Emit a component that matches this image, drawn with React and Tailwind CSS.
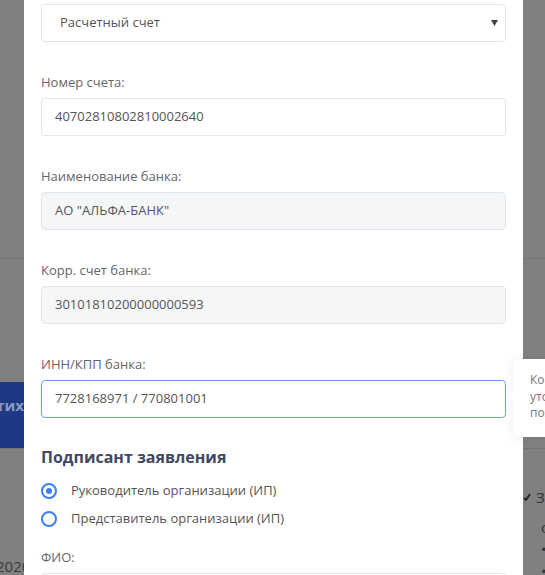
import React from 'react'

function Field({ label, value, disabled, focused }) {
  return (
    <div className="mt-[30px]">
      <div className="h-[20px] leading-[20px] text-[13px] text-[#666]">{label}</div>
      <div
        className={
          'mt-[6px] h-[38px] rounded-[4px] border px-[13px] flex items-center text-[13px] text-[#555] ' +
          (focused
            ? 'border-[#6d9df2] bg-white'
            : disabled
            ? 'border-[#e3e5ec] bg-[#f5f6f8]'
            : 'border-[#e3e5ec] bg-white')
        }
      >
        {value}
      </div>
    </div>
  )
}

function Radio({ checked, label }) {
  return (
    <div className="flex items-center h-[20px]">
      <span className="w-[16px] h-[16px] rounded-full border-2 border-[#3d7ef6] flex items-center justify-center">
        {checked && <span className="w-[6px] h-[6px] rounded-full bg-[#3d7ef6]" />}
      </span>
      <span className="ml-[14px] text-[13px] text-[#555]">{label}</span>
    </div>
  )
}

export default function App() {
  return (
    <div
      className="relative w-[545px] h-[575px] overflow-hidden bg-[#808080]"
      style={{ fontFamily: '"Open Sans", "Noto Sans", sans-serif' }}
    >
      {/* dimmed page behind the modal */}
      <div className="absolute inset-0">
        <div className="mt-[258px] h-px bg-[#747474]" />
        <div className="mt-[123px] w-[24px] h-[66px] bg-[#1d3985] flex items-center justify-end overflow-hidden">
          <span className="text-[15px] font-bold text-[#8d99bd] -mt-[20px] whitespace-nowrap">тих</span>
        </div>
        <div className="absolute left-0 right-0 top-[448px] h-px bg-[#747474]" />
        <div className="absolute left-[-4px] top-[555px] text-[15px] text-[#3a3a3a]">2020</div>
        <div className="absolute left-[523px] top-[486px] flex flex-col text-[15px] text-[#333] leading-[22px]">
          <div className="flex items-center gap-[5px]">
            <svg width="8" height="8" viewBox="0 0 8 8">
              <path d="M1 5 L3 7 L7 1" stroke="#222" strokeWidth="1.8" fill="none" />
            </svg>
            <span>З</span>
          </div>
          <div className="pl-[18px] mt-[8px]">с</div>
          <div className="pl-[18px]">•</div>
          <div className="pl-[18px]">•</div>
        </div>
      </div>

      {/* modal */}
      <div className="relative ml-[24px] w-[499px] h-full bg-white px-[17px] pt-[4px]">
        <div className="h-[38px] rounded-[4px] border border-[#e3e5ec] flex items-center justify-between pl-[18px] pr-[7px] text-[13px] text-[#555]">
          <span>Расчетный счет</span>
          <svg width="7" height="6" viewBox="0 0 7 6">
            <path d="M0 0 H7 L3.5 6 Z" fill="#444" />
          </svg>
        </div>

        <Field label="Номер счета:" value="40702810802810002640" />
        <Field label="Наименование банка:" value={'АО "АЛЬФА-БАНК"'} disabled />
        <Field label="Корр. счет банка:" value="30101810200000000593" disabled />
        <Field label="ИНН/КПП банка:" value="7728168971 / 770801001" focused />

        <div className="mt-[27px] h-[24px] leading-[24px] text-[16px] font-bold text-[#3f4863]">
          Подписант заявления
        </div>
        <div className="mt-[12px] flex flex-col gap-[8px]">
          <Radio checked label="Руководитель организации (ИП)" />
          <Radio label="Представитель организации (ИП)" />
        </div>
        <div className="mt-[18px] h-[20px] leading-[20px] text-[13px] text-[#666]">ФИО:</div>
        <div className="mt-[6px] h-[38px] rounded-[4px] border border-[#e3e5ec]" />
      </div>

      {/* tooltip */}
      <div className="absolute left-[513px] top-[359px] w-[60px] h-[78px] bg-white rounded-[3px] pl-[17px] pt-[13px] text-[12px] leading-[16.5px] text-[#777] whitespace-nowrap shadow-[0_0_8px_rgba(0,0,0,0.08)]">
        <span className="absolute left-[-5px] top-[30px] w-0 h-0 border-y-[6px] border-y-transparent border-r-[5px] border-r-white" />
        <div>Корректность</div>
        <div>уточните</div>
        <div>пожалуйста</div>
      </div>
    </div>
  )
}
